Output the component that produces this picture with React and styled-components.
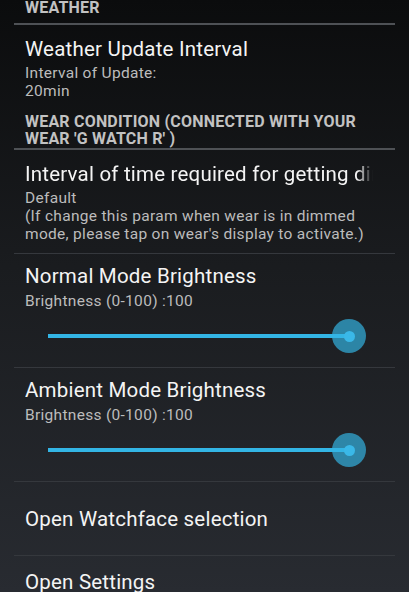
import React from 'react'
import styled, { createGlobalStyle } from 'styled-components'

const GlobalStyle = createGlobalStyle`
  html, body {
    margin: 0;
    padding: 0;
    height: 100%;
    overflow: hidden;
  }
  body {
    background: linear-gradient(to bottom, #0b0c0d 0%, #1a1c1f 45%, #282b31 100%);
    font-family: Roboto, 'Noto Sans', sans-serif;
    -webkit-font-smoothing: antialiased;
  }
`

const Screen = styled.div`
  width: 409px;
  height: 592px;
  overflow: hidden;
`

// the list is scrolled a little, so the first header is cut at the top
const List = styled.div`
  margin: -11px 14px 0 14px;
  display: flex;
  flex-direction: column;
`

const Category = styled.div`
  display: flex;
  align-items: center;
  min-height: 30px;
  padding: 3px 11px 1px;
  border-bottom: 2px solid #4e5155;
  color: #c2c2c2;
  font-size: 16px;
  font-weight: 700;
  letter-spacing: 0.2px;
  line-height: 17px;
  text-transform: uppercase;
  white-space: pre-line;
`

const Item = styled.div`
  display: flex;
  flex-direction: column;
  justify-content: center;
  padding: ${({ pad }) => pad || '10px 22px 10px 11px'};
  border-bottom: ${({ last }) => (last ? 'none' : '1px solid #35383d')};
`

const Title = styled.div`
  color: #f4f4f4;
  font-size: 20.5px;
  letter-spacing: 0.2px;
  line-height: 29px;
  white-space: nowrap;
  overflow: hidden;
  ${({ fade }) =>
    fade &&
    `
    -webkit-mask-image: linear-gradient(to right, #000 calc(100% - 16px), transparent);
    mask-image: linear-gradient(to right, #000 calc(100% - 16px), transparent);
  `}
`

const Summary = styled.div`
  color: #bcbcbc;
  font-size: 15.5px;
  letter-spacing: 0.3px;
  line-height: 18px;
  margin-top: ${({ gap }) => gap || 0}px;
  white-space: pre-line;
`

const SliderRow = styled.div`
  position: relative;
  height: 34px;
  margin: 9px 24px 0 23px;
  display: flex;
  align-items: center;
`

const Track = styled.div`
  width: 100%;
  height: 4px;
  background: #33b5e5;
`

const Thumb = styled.div`
  position: absolute;
  top: 50%;
  width: 34px;
  height: 34px;
  margin: -17px 0 0 -17px;
  border-radius: 50%;
  background: rgba(51, 181, 229, 0.68);
  display: flex;
  align-items: center;
  justify-content: center;

  &::after {
    content: '';
    width: 11px;
    height: 11px;
    border-radius: 50%;
    background: #3ab8e8;
  }
`

const Slider = ({ value }) => (
  <SliderRow>
    <Track />
    <Thumb style={{ left: `${value}%` }} />
  </SliderRow>
)

const BrightnessItem = ({ title, value }) => (
  <Item pad="8px 22px 14px 11px">
    <Title>{title}</Title>
    <Summary gap={1}>Brightness (0-100) :{value}</Summary>
    <Slider value={value} />
  </Item>
)

const App = () => (
  <Screen>
    <GlobalStyle />
    <List>
      <Category>Weather</Category>
      <Item last>
        <Title>Weather Update Interval</Title>
        <Summary>{'Interval of Update:\n20min'}</Summary>
      </Item>
      <Category>{"Wear condition (connected with your\nwear 'G Watch R' )"}</Category>
      <Item>
        <Title fade>Interval of time required for getting dimmed mode</Title>
        <Summary>
          {"Default\n(If change this param when wear is in dimmed\nmode, please tap on wear's display to activate.)"}
        </Summary>
      </Item>
      <BrightnessItem title="Normal Mode Brightness" value={100} />
      <BrightnessItem title="Ambient Mode Brightness" value={100} />
      <Item pad="23px 22px 21px 11px">
        <Title>Open Watchface selection</Title>
      </Item>
      <Item pad="12px 22px 10px 11px" last>
        <Title>Open Settings</Title>
      </Item>
    </List>
  </Screen>
)

export default App
